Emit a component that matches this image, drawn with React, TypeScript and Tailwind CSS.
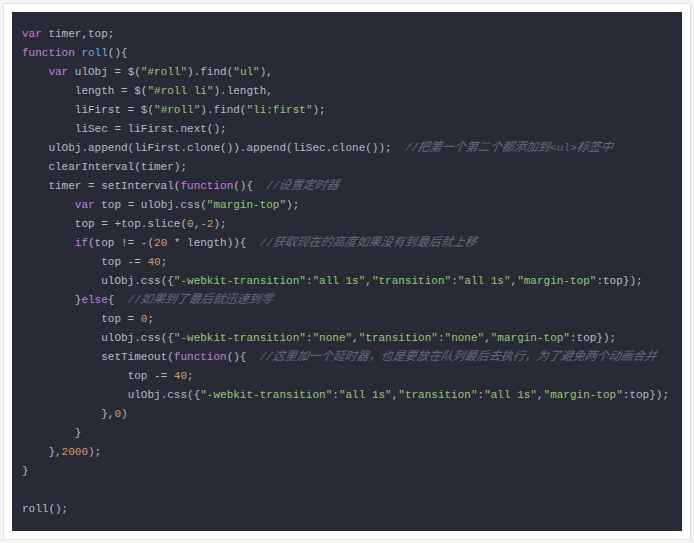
import React from "react";

type T = [string, string];
const K = "k", F = "f", S = "s", N = "n", P = "p", C = "c";

const cls: Record<string, string> = {
  k: "text-[#c07fdc]",
  f: "text-[#62aff0]",
  s: "text-[#98c379]",
  n: "text-[#d19a66]",
  p: "text-[#b4bac5]",
  c: "text-[#646a78] italic",
};

const lines: { indent: number; toks: T[] }[] = [
  { indent: 0, toks: [[K, "var"], [P, " timer,top;"]] },
  { indent: 0, toks: [[K, "function"], [P, " "], [F, "roll"], [P, "(){"]] },
  { indent: 4, toks: [[K, "var"], [P, " ulObj = $("], [S, '"#roll"'], [P, ").find("], [S, '"ul"'], [P, "),"]] },
  { indent: 8, toks: [[P, "length = $("], [S, '"#roll li"'], [P, ").length,"]] },
  { indent: 8, toks: [[P, "liFirst = $("], [S, '"#roll"'], [P, ").find("], [S, '"li:first"'], [P, ");"]] },
  { indent: 8, toks: [[P, "liSec = liFirst.next();"]] },
  { indent: 4, toks: [[P, "ulObj.append(liFirst.clone()).append(liSec.clone());  "], [C, "//把第一个第二个都添加到<ul>标签中"]] },
  { indent: 4, toks: [[P, "clearInterval(timer);"]] },
  { indent: 4, toks: [[P, "timer = setInterval("], [K, "function"], [P, "(){  "], [C, "//设置定时器"]] },
  { indent: 8, toks: [[K, "var"], [P, " top = ulObj.css("], [S, '"margin-top"'], [P, ");"]] },
  { indent: 8, toks: [[P, "top = +top.slice("], [N, "0"], [P, ","], [N, "-2"], [P, ");"]] },
  { indent: 8, toks: [[K, "if"], [P, "(top != -("], [N, "20"], [P, " * length)){  "], [C, "//获取现在的高度如果没有到最后就上移"]] },
  { indent: 12, toks: [[P, "top -= "], [N, "40"], [P, ";"]] },
  { indent: 12, toks: [[P, "ulObj.css({"], [S, '"-webkit-transition"'], [P, ":"], [S, '"all 1s"'], [P, ","], [S, '"transition"'], [P, ":"], [S, '"all 1s"'], [P, ","], [S, '"margin-top"'], [P, ":top});"]] },
  { indent: 8, toks: [[P, "}"], [K, "else"], [P, "{  "], [C, "//如果到了最后就迅速到零"]] },
  { indent: 12, toks: [[P, "top = "], [N, "0"], [P, ";"]] },
  { indent: 12, toks: [[P, "ulObj.css({"], [S, '"-webkit-transition"'], [P, ":"], [S, '"none"'], [P, ","], [S, '"transition"'], [P, ":"], [S, '"none"'], [P, ","], [S, '"margin-top"'], [P, ":top});"]] },
  { indent: 12, toks: [[P, "setTimeout("], [K, "function"], [P, "(){  "], [C, "//这里加一个延时器，也是要放在队列最后去执行，为了避免两个动画合并"]] },
  { indent: 16, toks: [[P, "top -= "], [N, "40"], [P, ";"]] },
  { indent: 16, toks: [[P, "ulObj.css({"], [S, '"-webkit-transition"'], [P, ":"], [S, '"all 1s"'], [P, ","], [S, '"transition"'], [P, ":"], [S, '"all 1s"'], [P, ","], [S, '"margin-top"'], [P, ":top});"]] },
  { indent: 12, toks: [[P, "},"], [N, "0"], [P, ")"]] },
  { indent: 8, toks: [[P, "}"]] },
  { indent: 4, toks: [[P, "},"], [N, "2000"], [P, ");"]] },
  { indent: 0, toks: [[P, "}"]] },
  { indent: 0, toks: [[P, " "]] },
  { indent: 0, toks: [[P, "roll();"]] },
];

function Comment({ text }: { text: string }) {
  const parts = text.match(/[\x00-\x7f]+|[^\x00-\x7f]+/g) || [];
  return (
    <span className={cls.c}>
      {parts.map((p, i) =>
        /[^\x00-\x7f]/.test(p) ? (
          <span
            key={i}
            className="text-[12px] leading-none inline-block -skew-x-12"
            style={{ fontFamily: '"Noto Sans CJK SC", sans-serif' }}
          >
            {p}
          </span>
        ) : (
          <span key={i}>{p}</span>
        )
      )}
    </span>
  );
}

export default function App() {
  return (
    <div className="w-[694px] h-[543px] bg-[#f4f4f4] p-[3px]">
      <div className="w-full h-full border border-[#e3e3e3] bg-white p-[8px]">
        <div
          className="w-full h-full bg-[#282b36] pt-[13px] pl-[10px] text-[11px] leading-[19px] text-[#b4bac5] whitespace-pre"
          style={{ fontFamily: '"Liberation Mono", "Noto Sans CJK SC", monospace' }}
        >
          {lines.map((l, i) => (
            <div key={i} className="h-[19px] overflow-visible">
              {" ".repeat(l.indent)}
              {l.toks.map(([t, s], j) =>
                t === C ? (
                  <Comment key={j} text={s} />
                ) : (
                  <span key={j} className={cls[t]}>
                    {s}
                  </span>
                )
              )}
            </div>
          ))}
        </div>
      </div>
    </div>
  );
}
